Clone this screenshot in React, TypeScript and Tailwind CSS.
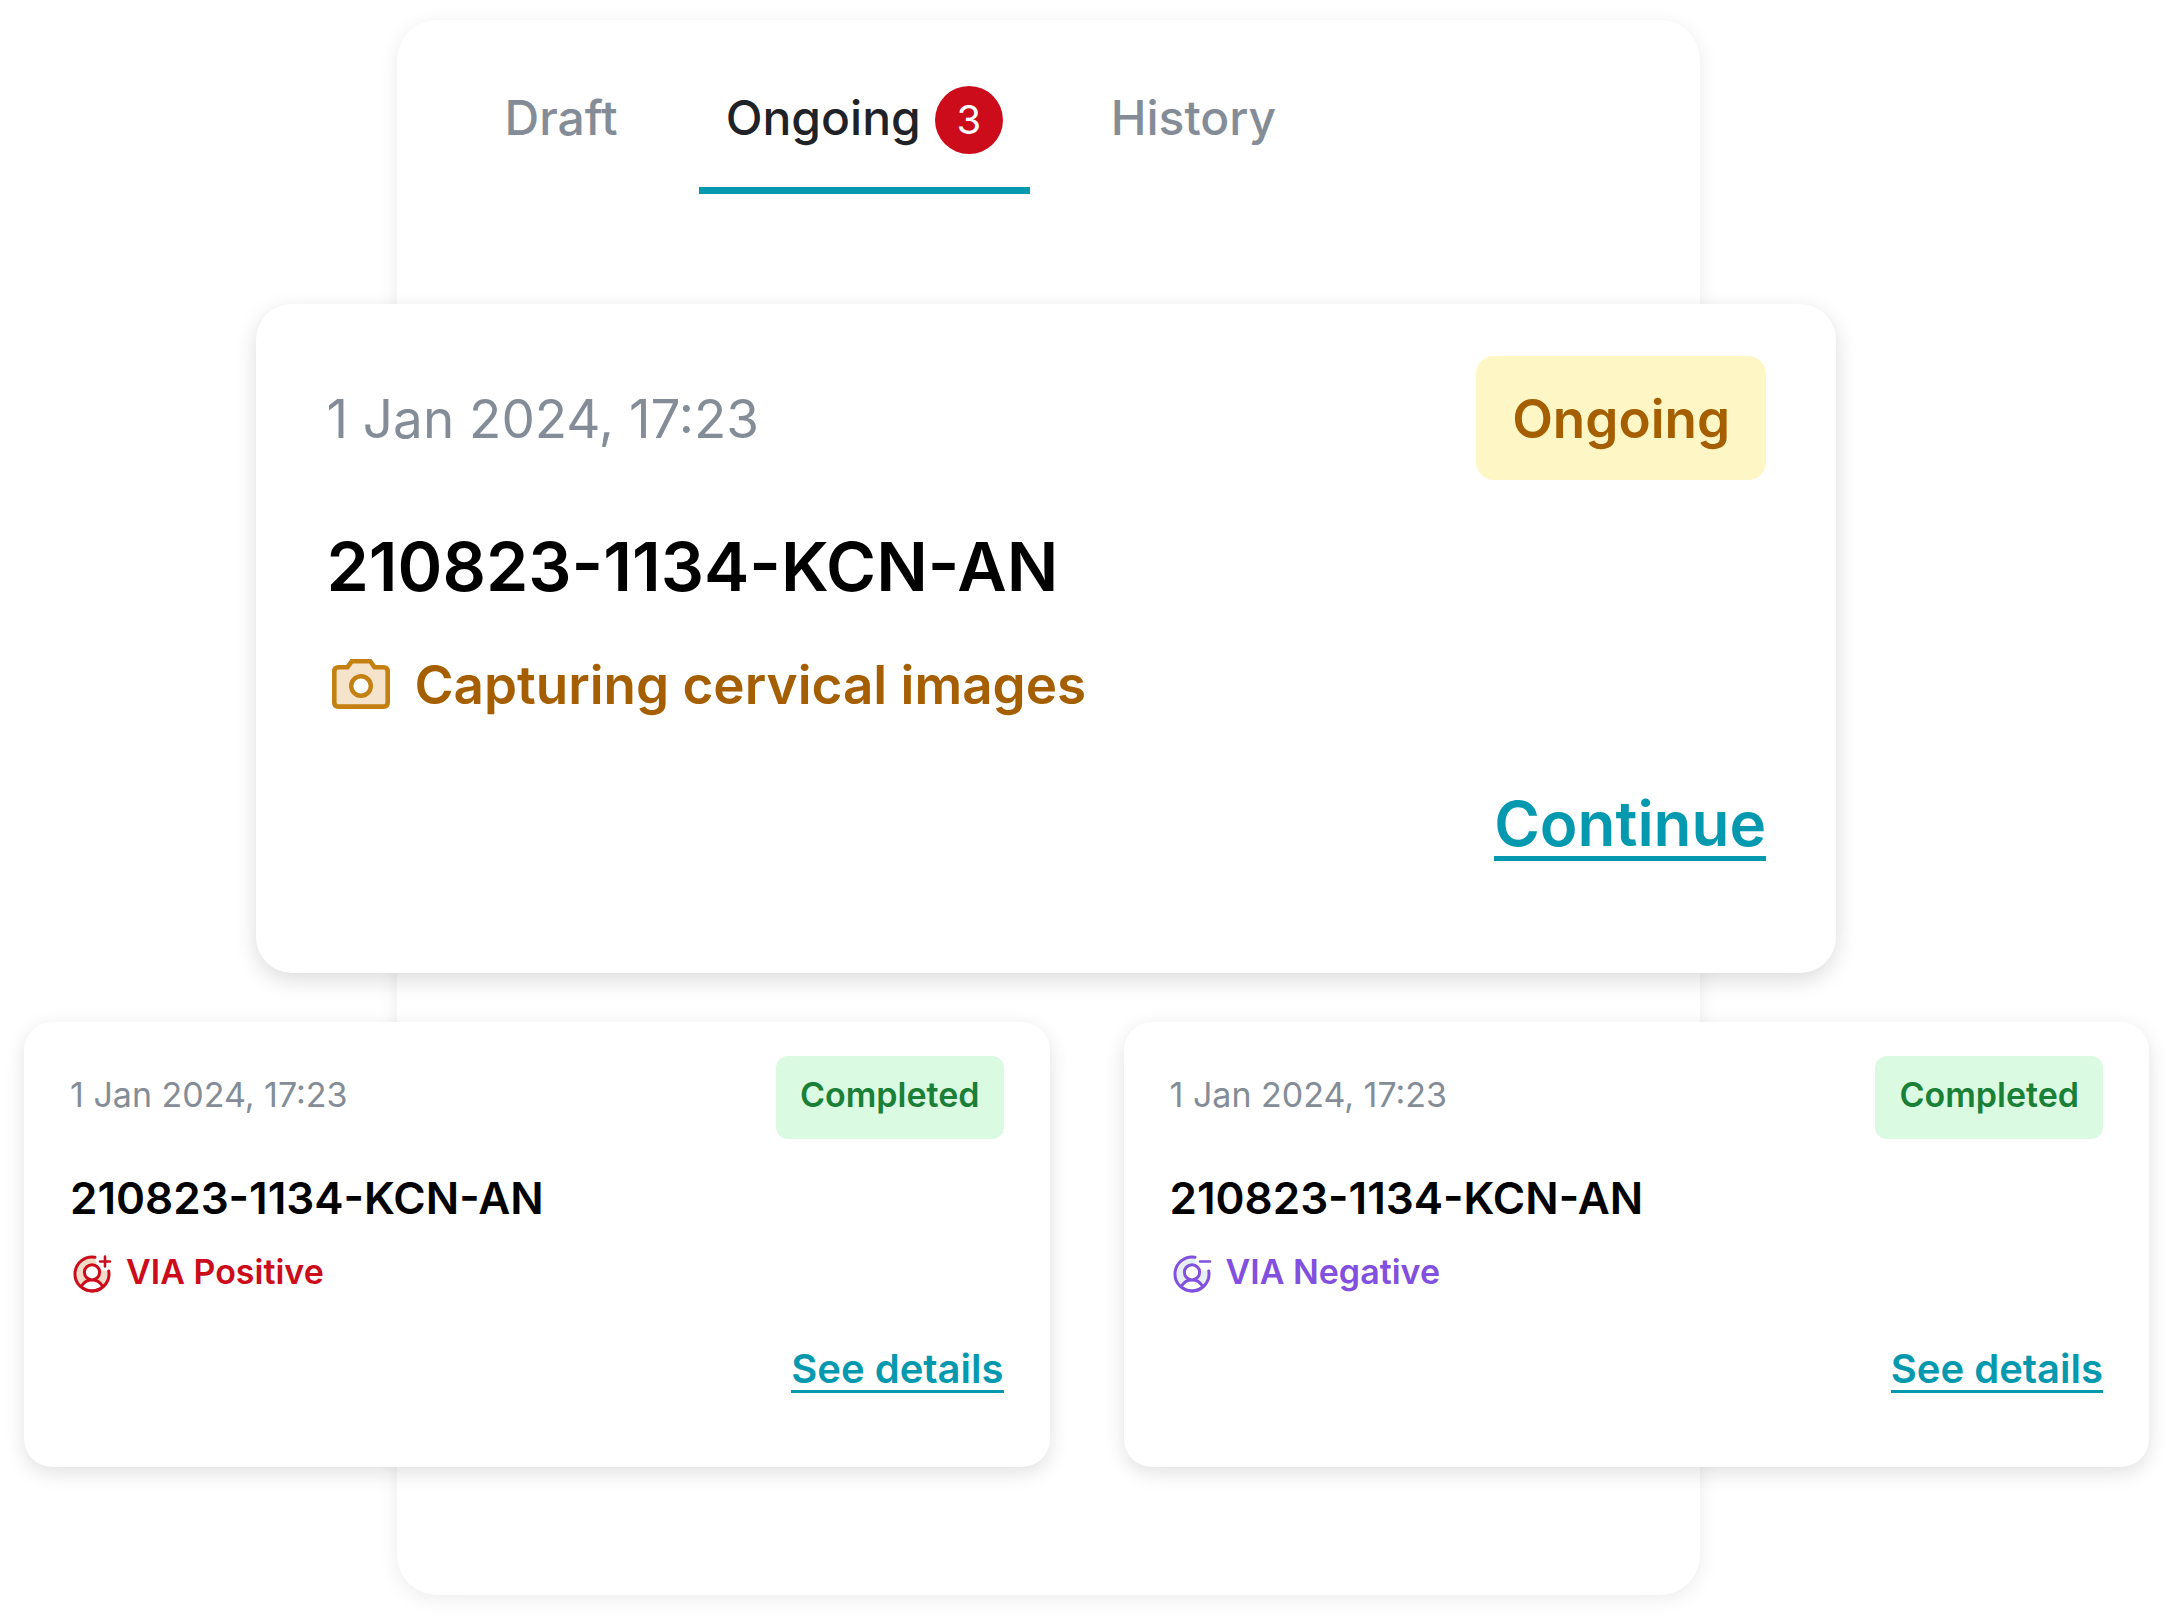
import { type ReactNode } from "react"
import clsx from "clsx"

const CameraIcon = () => (
  <svg viewBox="0 0 70 70" className="size-[70px] shrink-0" aria-hidden="true">
    <path
      d="M12.5 17.2H21.5L25.8 11.2H44.2L48.5 17.2H57.5Q61.7 17.2 61.7 21.4V52.4Q61.7 56.6 57.5 56.6H12.5Q8.3 56.6 8.3 52.4V21.4Q8.3 17.2 12.5 17.2Z"
      fill="#f5e3cb"
      stroke="#c58012"
      strokeWidth="4.6"
    />
    <circle
      cx="35"
      cy="36"
      r="9.8"
      fill="#fff"
      stroke="#c58012"
      strokeWidth="4.4"
    />
  </svg>
)

const ResultIcon = ({ positive }: { positive: boolean }) => (
  <svg
    viewBox="0 -2 44 44"
    className="size-11 shrink-0"
    fill="none"
    stroke="currentColor"
    strokeWidth="3"
    strokeLinecap="round"
    aria-hidden="true"
  >
    <path
      d="M25 5.3A17 17 0 1 0 38.7 19L34 19Q26 16 25 5.3Z"
      fill={positive ? "#f5dcc8" : "#e8eff1"}
      stroke="none"
    />
    <path d="M11 34.5Q15.5 27.7 22 27.7T33 34.5Q28 39 22 39T11 34.5Z" fill="#fff" />
    <circle cx="22" cy="20.3" r="7.6" fill="#fff" />
    <path d="M25 5.3A17 17 0 1 0 38.7 19" />
    <path
      d={positive ? "M30 9.5H40M35 4.5V14.5" : "M30 9.5H40"}
      strokeWidth="2.6"
    />
  </svg>
)

const Tab = ({
  children,
  active = false,
  count
}: {
  children: ReactNode
  active?: boolean
  count?: number
}) => (
  <button
    role="tab"
    aria-selected={active}
    className={clsx(
      "flex items-start gap-3.5 border-b-[7px] px-[27px] pb-[33px] text-[48px] leading-[64px] font-medium",
      active
        ? "border-[#0499ae] text-[#1f2328]"
        : "border-transparent text-[#848d97]"
    )}
  >
    {children}
    {count !== undefined && (
      <span className="flex size-[68px] items-center justify-center rounded-full bg-[#cc0c1a] text-[40px] font-normal text-white">
        {count}
      </span>
    )}
  </button>
)

const OngoingCard = () => (
  <article className="ml-[11.8%] w-[72.7%] rounded-[36px] bg-white px-[70px] pt-[52px] pb-28 shadow-[0_7px_22px_rgba(0,0,0,0.14)]">
    <div className="flex items-start justify-between text-[53px] leading-[64px]">
      <time className="pt-[31px] text-[#848d97]">1 Jan 2024, 17:23</time>
      <span className="rounded-[18px] bg-[#fff6c5] px-9 pt-[31px] pb-[29px] font-semibold text-[#a65f00]">
        Ongoing
      </span>
    </div>
    <h2 className="mt-11 text-[68px] leading-[84px] font-semibold text-black">
      210823-1134-KCN-AN
    </h2>
    <p className="mt-[42px] flex items-center gap-[18px] text-[53px] leading-[64px] font-semibold text-[#a65f00]">
      <CameraIcon />
      Capturing cervical images
    </p>
    <div className="mt-[72px] flex justify-end">
      <a
        href="#continue"
        className="border-b-[5px] border-[#0499ae] text-[62px] leading-[64px] font-semibold text-[#0499ae]"
      >
        Continue
      </a>
    </div>
  </article>
)

const CompletedCard = ({ positive }: { positive: boolean }) => (
  <article className="flex-1 rounded-[28px] bg-white px-[46px] pt-[34px] pb-[74px] shadow-[0_6px_20px_rgba(0,0,0,0.12)]">
    <div className="flex items-start justify-between text-[34px] leading-[42px]">
      <time className="pt-[18px] text-[#848d97]">1 Jan 2024, 17:23</time>
      <span className="rounded-xl bg-[#dafae1] px-6 pt-[18px] pb-[23px] font-semibold text-[#1a7f37]">
        Completed
      </span>
    </div>
    <h2 className="mt-[31px] text-[44px] leading-[56px] font-semibold text-black">
      210823-1134-KCN-AN
    </h2>
    <p
      className={clsx(
        "mt-6 flex items-center gap-3 text-[34px] leading-[42px] font-semibold",
        positive ? "text-[#cc0c1a]" : "text-[#8250df]"
      )}
    >
      <ResultIcon positive={positive} />
      {positive ? "VIA Positive" : "VIA Negative"}
    </p>
    <div className="mt-[54px] flex justify-end">
      <a
        href="#details"
        className="border-b-[3px] border-[#0499ae] text-[40px] leading-[42px] font-semibold text-[#0499ae]"
      >
        See details
      </a>
    </div>
  </article>
)

export default function App() {
  return (
    <main className="grid bg-white pt-5 pb-7 font-[Inter,sans-serif]">
      {/* tall sheet that sits behind the cards */}
      <div className="col-start-1 row-start-1 ml-[18.25%] w-[60%] rounded-[40px] bg-white shadow-[0_4px_20px_rgba(0,0,0,0.08)]" />
      <div className="col-start-1 row-start-1 pb-32">
        <div
          role="tablist"
          className="ml-[18.25%] flex w-[60%] gap-[54px] px-[81px] pt-[66px] pb-[110px]"
        >
          <Tab>Draft</Tab>
          <Tab active count={3}>
            Ongoing
          </Tab>
          <Tab>History</Tab>
        </div>
        <OngoingCard />
        <section className="mt-[49px] flex gap-[74px] px-6">
          <CompletedCard positive />
          <CompletedCard positive={false} />
        </section>
      </div>
    </main>
  )
}
